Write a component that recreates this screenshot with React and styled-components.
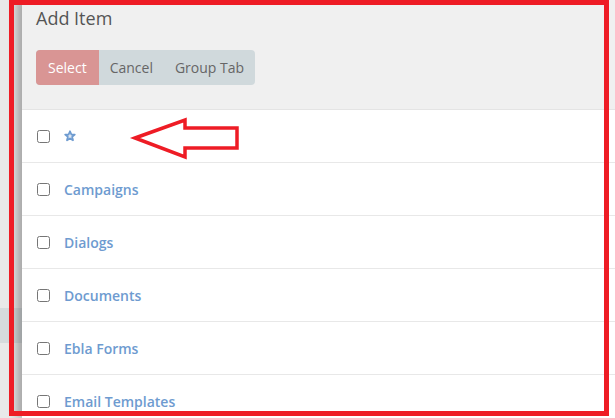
import styled, { createGlobalStyle } from "styled-components";

const GlobalStyle = createGlobalStyle`
  html, body {
    margin: 0;
    padding: 0;
    background: #e9e9e9;
    font-family: "Open Sans", "Liberation Sans", sans-serif;
  }
`;

const Page = styled.div`
  position: relative;
  display: flex;
  width: 615px;
  height: 418px;
  overflow: hidden;
  background: #e9e9e9;
`;

const Backdrop = styled.div`
  flex: 0 0 22px;
  display: flex;
  flex-direction: column;
  padding-top: 308px;
`;

const BackdropBand = styled.div`
  height: 35px;
  background: #d6dbdd;
`;

const Modal = styled.div`
  flex: 1;
  display: flex;
  flex-direction: column;
  background: #fff;
  box-shadow: -6px 0 8px rgba(0, 0, 0, 0.28);
`;

const Header = styled.div`
  flex: 0 0 auto;
  display: flex;
  flex-direction: column;
  gap: 19px;
  height: 103px;
  padding: 6px 14px 0;
  background: #f0f0f0;
  border-bottom: 1px solid #e4e4e4;
`;

const Title = styled.h3`
  margin: 0;
  font-size: 18px;
  line-height: 25px;
  font-weight: 400;
  color: #555;
`;

const ButtonGroup = styled.div`
  display: flex;
  align-self: flex-start;
  border-radius: 4px;
  overflow: hidden;
  background: #d0d9dc;
`;

const GroupButton = styled.button`
  height: 35px;
  padding: 0 ${(p) => (p.$primary ? "12px" : "11px")};
  border: none;
  font-family: inherit;
  font-size: 14px;
  color: ${(p) => (p.$primary ? "#fff" : "#666")};
  background: ${(p) => (p.$primary ? "#d99594" : "transparent")};
  cursor: pointer;
`;

const List = styled.div`
  display: flex;
  flex-direction: column;
`;

const Row = styled.label`
  display: flex;
  align-items: center;
  gap: 14px;
  flex: 0 0 52px;
  padding-left: 15px;
  border-bottom: 1px solid #e8e8e8;
`;

const Check = styled.input`
  width: 13px;
  height: 13px;
  margin: 0;
`;

const ItemName = styled.span`
  font-size: 14px;
  font-weight: 600;
  color: #6e9bd0;
`;

const Frame = styled.div`
  position: absolute;
  left: 9px;
  top: 0;
  width: 590px;
  height: 406px;
  border: 5px solid #ee1c25;
  pointer-events: none;
`;

const Arrow = styled.svg`
  position: absolute;
  left: 0;
  top: 0;
  pointer-events: none;
`;

const Star = () => (
  <svg width="12" height="12" viewBox="0 0 24 24">
    <polygon
      points="12,2.5 14.8,9 21.5,9.3 16.3,13.7 18,20.5 12,16.8 6,20.5 7.7,13.7 2.5,9.3 9.2,9"
      fill="#dfe8f4"
      stroke="#6e9bd0"
      strokeWidth="3.6"
      strokeLinejoin="round"
    />
  </svg>
);

const items = [null, "Campaigns", "Dialogs", "Documents", "Ebla Forms", "Email Templates"];

export default function App() {
  return (
    <>
      <GlobalStyle />
      <Page>
        <Backdrop>
          <BackdropBand />
        </Backdrop>
        <Modal>
          <Header>
            <Title>Add Item</Title>
            <ButtonGroup>
              <GroupButton $primary>Select</GroupButton>
              <GroupButton>Cancel</GroupButton>
              <GroupButton>Group Tab</GroupButton>
            </ButtonGroup>
          </Header>
          <List>
            {items.map((name, i) => (
              <Row key={i}>
                <Check type="checkbox" />
                {name ? <ItemName>{name}</ItemName> : <Star />}
              </Row>
            ))}
          </List>
        </Modal>
        <Frame />
        <Arrow width="615" height="418">
          <polygon
            points="135,138 185,120 185,128 237,128 237,148 185,148 185,157"
            fill="none"
            stroke="#ee1c25"
            strokeWidth="3.5"
            strokeLinejoin="miter"
          />
        </Arrow>
      </Page>
    </>
  );
}
